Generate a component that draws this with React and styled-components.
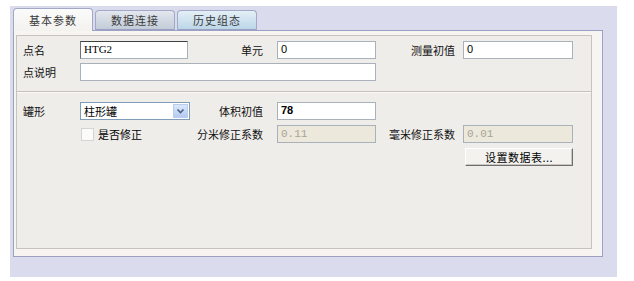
import React from "react";
import styled, { createGlobalStyle } from "styled-components";

const Global = createGlobalStyle`
  body {
    margin: 0;
    background: #ffffff;
    font-family: "Noto Sans CJK SC", "Liberation Sans", sans-serif;
    font-size: 11px;
    color: #000;
  }
`;

const Frame = styled.div`
  margin: 6px 0 0 10px;
  width: 607px;
  height: 271px;
  box-sizing: border-box;
  background: #dadced;
  padding: 2px 0 0 3px;
`;

const TabBar = styled.div`
  display: flex;
  align-items: flex-end;
  gap: 2px;
  height: 22px;
  position: relative;
  z-index: 1;
`;

const Tab = styled.div`
  width: 80px;
  height: ${(p) => (p.$active ? "23px" : "20px")};
  box-sizing: border-box;
  display: flex;
  align-items: center;
  justify-content: center;
  border: 1px solid #a3a8c6;
  border-bottom: ${(p) => (p.$active ? "none" : "1px solid #9ca1c4")};
  border-radius: 4px 4px 0 0;
  color: #3a3a3a;
  letter-spacing: 1px;
  background: ${(p) =>
    p.$active
      ? "linear-gradient(#fbfbfb, #f3f2ef)"
      : p.$tone === "blue"
      ? "linear-gradient(#e4eff6, #bcd7e9)"
      : "linear-gradient(#e3e7ee, #c2ccd8)"};
  margin-bottom: ${(p) => (p.$active ? "-1px" : "0")};
`;

const Pane = styled.div`
  width: 590px;
  height: 227px;
  box-sizing: border-box;
  border: 1px solid #9ca1c4;
  background: #f6f5f2;
  padding: 4px 10px 7px 2px;
`;

const Group = styled.div`
  height: 100%;
  box-sizing: border-box;
  border: 1px solid #c6c4bc;
  background: #efedea;
`;

const Section = styled.div`
  display: grid;
  grid-template-columns: 57px 110px 87px 99px 87px 110px;
  grid-auto-rows: 18px;
  row-gap: ${(p) => p.$gap || 4}px;
  padding: ${(p) => p.$pad};
  border-top: ${(p) => (p.$divided ? "1px solid #c3c1ba" : "none")};
  box-shadow: ${(p) => (p.$divided ? "inset 0 1px 0 #fbfaf8" : "none")};
`;

const Label = styled.div`
  display: flex;
  align-items: center;
  justify-content: ${(p) => (p.$right ? "flex-end" : "flex-start")};
  padding-right: ${(p) => p.$pr || 0}px;
  white-space: nowrap;
  color: #111;
`;

const Input = styled.div`
  grid-column: ${(p) => p.$span || "auto"};
  width: ${(p) => p.$w || "100%"};
  height: 18px;
  box-sizing: border-box;
  background: ${(p) => (p.$disabled ? "#ece8db" : "#ffffff")};
  border: 1px solid #a9b1ba;
  border-top-color: ${(p) => (p.$sunken ? "#404040" : "#a9b1ba")};
  border-left-color: ${(p) => (p.$sunken ? "#707070" : "#a9b1ba")};
  padding: 0 3px;
  display: flex;
  align-items: ${(p) => (p.$disabled ? "center" : "flex-start")};
  font-family: ${(p) =>
    p.$disabled ? '"Liberation Mono", monospace' : p.$serif ? '"Liberation Serif", serif' : '"Liberation Sans", sans-serif'};
  font-size: 11px;
  font-weight: ${(p) => (p.$bold ? 700 : 400)};
  color: ${(p) => (p.$disabled ? "#aaa496" : "#000")};
  line-height: 15px;
`;

const Select = styled.div`
  height: 18px;
  box-sizing: border-box;
  border: 1px solid #7f9db9;
  background: #fff;
  display: flex;
  align-items: center;
  justify-content: space-between;
  padding-left: 3px;
`;

const Arrow = styled.div`
  width: 15px;
  height: 14px;
  margin-right: 1px;
  background: linear-gradient(#dbe7fb, #b4cbf0);
  border: 1px solid #b8cdf0;
  box-sizing: border-box;
  display: flex;
  align-items: center;
  justify-content: center;
`;

const Check = styled.label`
  display: flex;
  align-items: center;
  gap: 4px;
  padding-left: 1px;
`;

const Box = styled.span`
  width: 11px;
  height: 11px;
  background: #fbfbfa;
  border: 1px solid #d6d4ce;
`;

const Button = styled.div`
  grid-column: 6;
  margin-left: 2px;
  width: 108px;
  height: 18px;
  box-sizing: border-box;
  background: #f3f2ef;
  border: 1px solid #ffffff;
  border-right-color: #6e6e6e;
  border-bottom-color: #6e6e6e;
  box-shadow: 0 0 0 0 transparent, inset -1px -1px 0 #c9c7c0;
  display: flex;
  align-items: center;
  justify-content: center;
  letter-spacing: 0.5px;
`;

export default function App() {
  return (
    <>
      <Global />
      <Frame>
        <TabBar>
          <Tab $active>基本参数</Tab>
          <Tab>数据连接</Tab>
          <Tab $tone="blue">历史组态</Tab>
        </TabBar>
        <Pane>
          <Group>
            <Section $pad="5px 0 10px 6px">
              <Label>点名</Label>
              <Input $w="108px" $sunken $serif>HTG2</Input>
              <Label $right $pr={14}>单元</Label>
              <Input>0</Input>
              <Label $right $pr={8}>测量初值</Label>
              <Input>0</Input>
              <Label>点说明</Label>
              <Input $span="2 / 5" />
            </Section>
            <Section $divided $gap={5} $pad="10px 0 0 6px">
              <Label>罐形</Label>
              <Select>
                <span>柱形罐</span>
                <Arrow>
                  <svg width="9" height="7" viewBox="0 0 9 7">
                    <path d="M1.5 1.5 L4.5 4.5 L7.5 1.5" fill="none" stroke="#4d6185" strokeWidth="1.6" />
                  </svg>
                </Arrow>
              </Select>
              <Label $right $pr={14}>体积初值</Label>
              <Input $bold>78</Input>
              <div />
              <div />
              <div />
              <Check>
                <Box />
                <span>是否修正</span>
              </Check>
              <Label $right $pr={14}>分米修正系数</Label>
              <Input $disabled>0.11</Input>
              <Label $right $pr={8}>毫米修正系数</Label>
              <Input $disabled>0.01</Input>
              <Button>设置数据表...</Button>
            </Section>
          </Group>
        </Pane>
      </Frame>
    </>
  );
}
